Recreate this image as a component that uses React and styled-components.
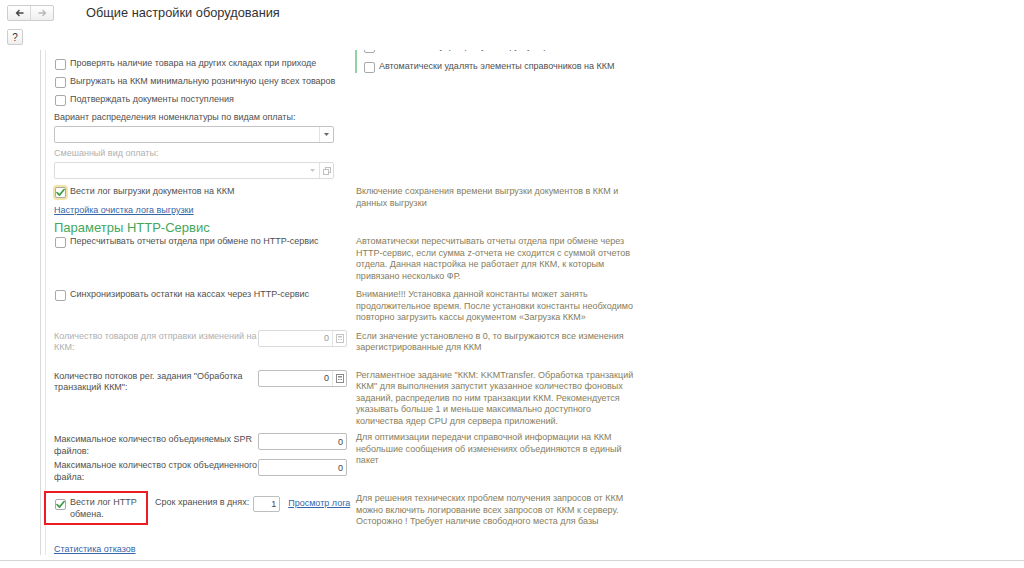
import React from "react";
import styled, { createGlobalStyle, css } from "styled-components";

const Global = createGlobalStyle`
  html, body { margin: 0; padding: 0; background: #fff; }
  body { font-family: "Liberation Sans", Arial, sans-serif; color: #4f4f4f; }
  #root { width: 1024px; height: 568px; overflow: hidden; }
`;

const FS = "9px";
const LH = "11.5px";

const Page = styled.div`
  width: 1024px;
  height: 568px;
  overflow: hidden;
  background: #fff;
`;

const Header = styled.div`
  display: flex;
  align-items: center;
  height: 16px;
  padding: 5px 0 0 7px;
`;

const ButtonBase = css`
  box-sizing: border-box;
  height: 16px;
  border: 1px solid #cdcdcd;
  border-radius: 2px;
  background: linear-gradient(#ffffff, #efefef);
`;

const NavGroup = styled.div`
  ${ButtonBase};
  display: flex;
  width: 47px;
`;

const NavBtn = styled.div`
  flex: 1;
  display: flex;
  align-items: center;
  justify-content: center;
  & + & { border-left: 1px solid #dadada; }
`;

const Title = styled.h1`
  margin: 0 0 0 32px;
  font-size: 12.8px;
  line-height: 16px;
  font-weight: normal;
  color: #333;
`;

const HelpBar = styled.div`
  padding: 8px 0 0 7px;
  height: 16px;
`;

const HelpBtn = styled.div`
  ${ButtonBase};
  width: 16px;
  display: flex;
  align-items: center;
  justify-content: center;
  font-size: 10px;
  color: #333;
`;

const Body = styled.div`
  margin: 5px 0 0 40px;
  height: 505px;
  border-left: 1px solid #d9d9d9;
  overflow: hidden;
`;

const Inner = styled.div`
  margin-left: 4px;
  height: 100%;
  border-left: 1px solid #e6e6e6;
  padding-left: 8px;
`;

const TwoCols = styled.div`
  display: grid;
  grid-template-columns: 296px 300px;
  column-gap: 6px;
  align-items: start;
  margin-top: ${(p) => p.$mt || 0}px;
`;

const Stack = styled.div`
  display: flex;
  flex-direction: column;
  align-items: flex-start;
  padding-top: ${(p) => p.$pt || 0}px;
`;

const GreenGroup = styled.div`
  margin: -15px 0 0 -1px;
  padding: 6px 0 0 6px;
  border-left: 2px solid #93d3a3;
  display: flex;
  flex-direction: column;
`;

const CheckRow = styled.label`
  display: flex;
  align-items: center;
  gap: 4px;
  height: 12px;
  margin-top: ${(p) => p.$mt || 0}px;
  font-size: ${FS};
  line-height: ${LH};
  white-space: nowrap;
  color: #505050;
`;

const Box = styled.span`
  box-sizing: border-box;
  flex: none;
  width: 11px;
  height: 11px;
  border: 1px solid #a9a9a9;
  border-radius: 2px;
  background: #fff;
  display: flex;
  align-items: center;
  justify-content: center;
  margin-left: 1px;
  ${(p) => p.$focus && css`box-shadow: 0 0 0 2px #f3e4a6;`}
  margin-top: ${(p) => p.$mt || 0}px;
`;

const Label = styled.div`
  font-size: ${FS};
  line-height: ${LH};
  white-space: nowrap;
  color: ${(p) => (p.$disabled ? "#b0b0b0" : "#505050")};
  margin-top: ${(p) => p.$mt || 0}px;
  margin-left: ${(p) => p.$ml || 0}px;
  padding-top: ${(p) => p.$pt || 0}px;
`;

const Select = styled.div`
  box-sizing: border-box;
  width: 280px;
  height: 17px;
  margin-top: ${(p) => p.$mt || 0}px;
  border: 1px solid ${(p) => (p.$disabled ? "#dcdcdc" : "#c3c3c3")};
  border-radius: 2px;
  background: #fff;
  display: flex;
  justify-content: flex-end;
  align-items: stretch;
`;

const SelectBtn = styled.div`
  width: 13px;
  display: flex;
  align-items: center;
  justify-content: center;
  border-left: ${(p) => (p.$sep ? "1px solid #e2e2e2" : "none")};
`;

const Link = styled.a`
  display: block;
  font-size: ${FS};
  line-height: 12px;
  color: #3566a9;
  text-decoration: underline;
  white-space: nowrap;
  margin-top: ${(p) => p.$mt || 0}px;
  margin-left: ${(p) => p.$ml || 0}px;
`;

const GroupTitle = styled.div`
  font-size: 13px;
  line-height: 15px;
  color: #43a85c;
  margin-top: ${(p) => p.$mt || 0}px;
`;

const Desc = styled.div`
  font-size: ${FS};
  line-height: ${LH};
  color: #857d60;
  white-space: nowrap;
  padding-top: ${(p) => p.$pt || 0}px;
`;

const FieldRow = styled.div`
  display: flex;
  align-items: flex-start;
  margin-top: ${(p) => p.$mt || 0}px;
`;

const FieldLabel = styled(Label)`
  width: 198px;
  flex: none;
  padding-top: 1px;
`;

const NumField = styled.div`
  box-sizing: border-box;
  flex: none;
  width: ${(p) => p.$w || 89}px;
  height: ${(p) => p.$h || 17}px;
  margin-left: ${(p) => p.$ml ?? 6}px;
  margin-top: ${(p) => p.$mt || 0}px;
  border: 1px solid ${(p) => (p.$disabled ? "#dadada" : "#bdbdbd")};
  border-radius: 2px;
  background: #fff;
  display: flex;
  align-items: center;
  font-size: ${FS};
  color: ${(p) => (p.$disabled ? "#9a9a9a" : "#444")};
`;

const NumValue = styled.span`
  flex: 1;
  text-align: right;
  padding-right: 3px;
`;

const CalcBtn = styled.span`
  width: 13px;
  height: 100%;
  display: flex;
  align-items: center;
  justify-content: center;
  border-left: 1px solid #e4e4e4;
`;

const HttpRow = styled.div`
  display: flex;
  align-items: flex-start;
`;

const Highlight = styled.div`
  box-sizing: border-box;
  flex: none;
  width: 104px;
  height: 34px;
  margin-left: -10px;
  border: 2px solid #ec1c24;
  padding: 4px 6px 0 8px;
  display: flex;
  align-items: flex-start;
  gap: 4px;
`;

const HighlightText = styled.span`
  font-size: ${FS};
  line-height: ${LH};
  color: #505050;
  white-space: nowrap;
`;

const BottomLine = styled.div`
  margin-top: 5px;
  height: 1px;
  background: #d4d4d4;
`;

const Check = () => (
  <svg width="10" height="9" viewBox="0 0 10 9">
    <path d="M1.2 4.6 L3.8 7.4 L9 1.2" fill="none" stroke="#3a9d45" strokeWidth="1.8" strokeLinecap="round" strokeLinejoin="round" />
  </svg>
);

const Arrow = ({ dir, color }) => (
  <svg width="9" height="8" viewBox="0 0 9 8">
    {dir === "left" ? (
      <path d="M8.5 4 H1.5 M4.5 1 L1.5 4 L4.5 7" fill="none" stroke={color} strokeWidth="1.3" />
    ) : (
      <path d="M0.5 4 H7.5 M4.5 1 L7.5 4 L4.5 7" fill="none" stroke={color} strokeWidth="1.3" />
    )}
  </svg>
);

const DropTri = ({ color }) => (
  <svg width="5" height="3" viewBox="0 0 5 3">
    <path d="M0 0 H5 L2.5 3 Z" fill={color} />
  </svg>
);

const OpenIcon = () => (
  <svg width="8" height="8" viewBox="0 0 8 8">
    <rect x="2.5" y="0.5" width="5" height="5" fill="none" stroke="#c0c0c0" />
    <rect x="0.5" y="2.5" width="5" height="5" fill="#fff" stroke="#c0c0c0" />
  </svg>
);

const CalcIcon = ({ color }) => (
  <svg width="8" height="9" viewBox="0 0 8 9">
    <rect x="0.5" y="0.5" width="7" height="8" fill="none" stroke={color} />
    <rect x="2" y="2" width="4" height="1.5" fill={color} />
    <rect x="2" y="5" width="1" height="1" fill={color} />
    <rect x="3.5" y="5" width="1" height="1" fill={color} />
    <rect x="5" y="5" width="1" height="1" fill={color} />
  </svg>
);

const Lines = ({ lines }) =>
  lines.map((l, i) => (
    <React.Fragment key={i}>
      {i > 0 && <br />}
      {l}
    </React.Fragment>
  ));

const CB = ({ checked, focus, children, mt }) => (
  <CheckRow $mt={mt}>
    <Box $focus={focus}>{checked && <Check />}</Box>
    <span>{children}</span>
  </CheckRow>
);

const Num = ({ value, disabled, calc }) => (
  <NumField $disabled={disabled}>
    <NumValue>{value}</NumValue>
    {calc && (
      <CalcBtn>
        <CalcIcon color={disabled ? "#c4c4c4" : "#8a8a8a"} />
      </CalcBtn>
    )}
  </NumField>
);

export default function App() {
  return (
    <Page>
      <Global />
      <Header>
        <NavGroup>
          <NavBtn><Arrow dir="left" color="#444" /></NavBtn>
          <NavBtn><Arrow dir="right" color="#b8b8b8" /></NavBtn>
        </NavGroup>
        <Title>Общие настройки оборудования</Title>
      </Header>
      <HelpBar>
        <HelpBtn>?</HelpBtn>
      </HelpBar>
      <Body>
        <Inner>
          <TwoCols>
            <Stack $pt={8}>
              <CB>Проверять наличие товара на других складах при приходе</CB>
              <CB mt={6}>Выгружать на ККМ минимальную розничную цену всех товаров</CB>
              <CB mt={6}>Подтверждать документы поступления</CB>
              <Label $mt={6}>Вариант распределения номенклатуры по видам оплаты:</Label>
              <Select $mt={2}>
                <SelectBtn $sep><DropTri color="#666" /></SelectBtn>
              </Select>
              <Label $mt={5} $disabled>Смешанный вид оплаты:</Label>
              <Select $mt={3} $disabled>
                <SelectBtn><DropTri color="#c8c8c8" /></SelectBtn>
                <SelectBtn $sep><OpenIcon /></SelectBtn>
              </Select>
            </Stack>
            <GreenGroup>
              <CB>Использовать упрощенную выгрузку справочников на ККМ</CB>
              <CB mt={8}>Автоматически удалять элементы справочников на ККМ</CB>
            </GreenGroup>
          </TwoCols>

          <TwoCols $mt={7}>
            <Stack>
              <CB checked focus>Вести лог выгрузки документов на ККМ</CB>
              <Link $mt={6} href="#">Настройка очистка лога выгрузки</Link>
            </Stack>
            <Desc>
              <Lines lines={["Включение сохранения времени выгрузки документов в ККМ и", "данных выгрузки"]} />
            </Desc>
          </TwoCols>

          <GroupTitle $mt={4}>Параметры HTTP-Сервис</GroupTitle>

          <TwoCols $mt={1}>
            <Stack>
              <CB>Пересчитывать отчеты отдела при обмене по HTTP-сервис</CB>
            </Stack>
            <Desc>
              <Lines
                lines={[
                  "Автоматически пересчитывать отчеты отдела при обмене через",
                  "HTTP-сервис, если сумма z-отчета не сходится с суммой отчетов",
                  "отдела. Данная настройка не работает для ККМ, к которым",
                  "привязано несколько ФР.",
                ]}
              />
            </Desc>
          </TwoCols>

          <TwoCols $mt={7}>
            <Stack>
              <CB>Синхронизировать остатки на кассах через HTTP-сервис</CB>
            </Stack>
            <Desc>
              <Lines
                lines={[
                  "Внимание!!! Установка данной константы может занять",
                  "продолжительное время. После установки константы необходимо",
                  "повторно загрузить кассы документом «Загрузка ККМ»",
                ]}
              />
            </Desc>
          </TwoCols>

          <TwoCols $mt={6}>
            <FieldRow>
              <FieldLabel $disabled>
                <Lines lines={["Количество товаров для отправки изменений на", "ККМ:"]} />
              </FieldLabel>
              <Num value="0" disabled calc />
            </FieldRow>
            <Desc $pt={1}>
              <Lines
                lines={[
                  "Если значение установлено в 0, то выгружаются все изменения",
                  "зарегистрированные для ККМ",
                ]}
              />
            </Desc>
          </TwoCols>

          <TwoCols $mt={16}>
            <FieldRow>
              <FieldLabel>
                <Lines lines={["Количество потоков рег. задания \"Обработка", "транзакций ККМ\":"]} />
              </FieldLabel>
              <Num value="0" calc />
            </FieldRow>
            <Desc>
              <Lines
                lines={[
                  "Регламентное задание \"ККМ: KKMTransfer. Обработка транзакций",
                  "ККМ\" для выполнения запустит указанное количество фоновых",
                  "заданий, распределив по ним транзакции ККМ. Рекомендуется",
                  "указывать больше 1 и меньше максимально доступного",
                  "количества ядер CPU для сервера приложений.",
                ]}
              />
            </Desc>
          </TwoCols>

          <TwoCols $mt={5}>
            <Stack>
              <FieldRow $mt={1}>
                <FieldLabel>
                  <Lines lines={["Максимальное количество объединяемых SPR", "файлов:"]} />
                </FieldLabel>
                <Num value="0" />
              </FieldRow>
              <FieldRow $mt={2}>
                <FieldLabel>
                  <Lines lines={["Максимальное количество строк объединенного", "файла:"]} />
                </FieldLabel>
                <Num value="0" />
              </FieldRow>
            </Stack>
            <Desc>
              <Lines
                lines={[
                  "Для оптимизации передачи справочной информации на ККМ",
                  "небольшие сообщения об изменениях объединяются в единый",
                  "пакет",
                ]}
              />
            </Desc>
          </TwoCols>

          <TwoCols $mt={8}>
            <HttpRow>
              <Highlight>
                <Box $mt={2}><Check /></Box>
                <HighlightText>
                  <Lines lines={["Вести лог HTTP", "обмена."]} />
                </HighlightText>
              </Highlight>
              <Label $mt={6} $ml={7}>Срок хранения в днях:</Label>
              <NumField $w={27} $h={16} $ml={4} $mt={5}>
                <NumValue>1</NumValue>
              </NumField>
              <Link href="#" $mt={6} $ml={8}>Просмотр лога</Link>
            </HttpRow>
            <Desc $pt={2}>
              <Lines
                lines={[
                  "Для решения технических проблем получения запросов от ККМ",
                  "можно включить логирование всех запросов от ККМ к серверу.",
                  "Осторожно !  Требует наличие свободного места для базы",
                ]}
              />
            </Desc>
          </TwoCols>

          <Link href="#" $mt={15}>Статистика отказов</Link>
        </Inner>
      </Body>
      <BottomLine />
    </Page>
  );
}
